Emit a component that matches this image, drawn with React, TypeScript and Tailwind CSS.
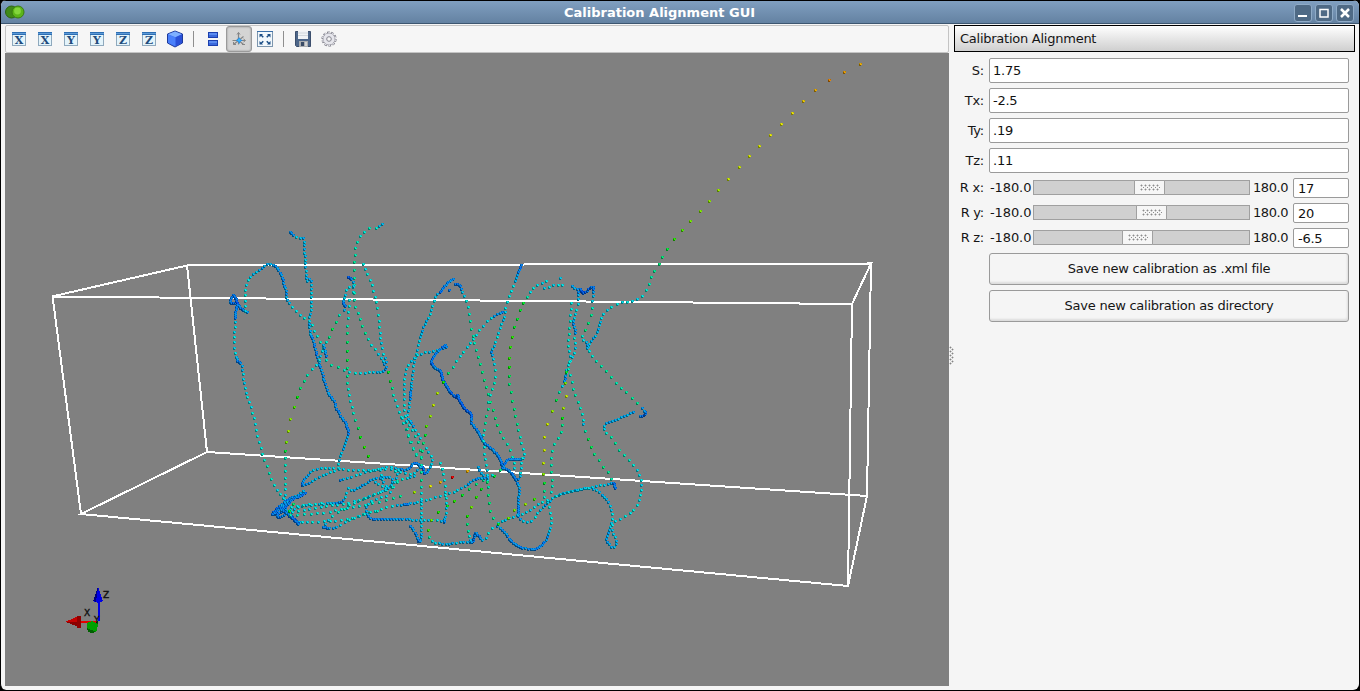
import { Fragment } from "react";
import type { ReactNode } from "react";

type Sample = [x: number, y: number, step: number];

/* Each track is "x,y,step"; step is the spacing between samples and drives the colour. */
const TRACKS: string[] = [
  "290,232,1 293,235,1.5 298,238,3 304,239,2 304,247,2.5 305,262,2.5 306,275,2.5 307,281,2 310,279,2 311,290,2.8 311,310,3 309,320,2 310,333,2 312,338,1.3 317,357,1.3 321,370,1.5 328,393,1.5 333,400,1.3 338,412,1.3 345,423,1.3 348,432,1.2 347,438,2 343,448,2 339,460,3 338,467,4",
  "233,295,1 230,302,1 237,303,.8 240,308,1.2 247,312,1.2",
  "234,296,1 237,303,.7 236,307,1.2 235,318,1.2 235,327,4.2 234,338,4.2 235,353,4 237,360,1 240,363,1 242,368,2.4 243,377,3.5 245,387,3.5 248,400,4 252,412,4.5 255,425,5 259,442,5 263,456,5.5 267,467,6 270,477,6 275,487,5 280,495,4.5 285,500,4",
  "245,311,4 245,293,4.5 247,282,4 252,275,3 260,270,2 268,264,2 275,266,1.5 280,273,1.5 283,282,1.5 286,292,1.5 287,300,2 295,310,4.5 302,317,5 310,322,4 315,332,5 321,344,6 325,353,5 328,363,6 337,366,7 348,372,5 360,373,4 373,372,3 383,371,2 386,367,1.5 383,362,2 377,352,4 370,343,5 365,333,7 362,327,7 358,313,6 355,307,6 354,290,6 354,265,7 355,252,6 357,242,6 362,234,5 368,228,6 375,228,6 380,225,2 382,224,2",
  "386,362,2 383,352,4 380,338,4 379,325,5 377,307,5.5 375,297,5 371,283,5 367,275,5 362,263,4",
  "388,372,9 390,381,9 392,390,7 394,398,5 398,410,5 402,420,5 406,430,6 410,440,6 414,450,6 419,458,6",
  "348,277,.7 352,280,1 353,286,4 353,295,5",
  "353,286,3 349,287,3 346,290,4 344,297,3 343,303,1.2 345,307,1 342,312,4 338,317,7 334,325,8 330,333,9 327,341,6 323,347,4 320,357,3.5 317,363,4 308,374,6 305,380,7 300,387,8 295,403,10 289,423,12 287,437,12 285,448,10 285,458,6 285,477,5.5 285,493,4 285,503,4",
  "323,345,2 325,352,1.5 327,358,1.5",
  "349,300,5 348,317,5 347,337,8 347,357,9 347,376,7 348,392,5 351,403,5 354,417,6 357,425,8 359,434,9 363,444,10 367,453,10 371,463,9",
  "453,279,1.2 447,283,1.3 440,292,1 435,297,3 432,307,3.4 428,318,3 423,328,2 418,345,3 414,362,3 412,378,3 410,395,1 409,405,3 407,417,3 412,424,1.3 417,433,4 422,442,4.5 427,450,4 432,457,4 431,463,3 428,470,1.5 424,473,1 422,467,1 415,463,1 407,469,1.5 400,469,1.7 390,467,3 373,470,3.5 353,470,4 335,468,3.5 320,468,3 312,471,2.5 305,478,1.7 302,485,.8 306,484,1.5 317,478,2.8 330,472,3 340,469,4",
  "449,290,.8",
  "455,284,1 460,286,1 463,295,3 467,305,5 471,327,7 474,342,6 478,357,7 483,377,8 487,392,7 492,408,8 497,425,8 500,432,7 506,443,6 512,455,6 515,472,4",
  "446,347,1 440,349,2 432,351,3 423,353,3 415,357,3 407,367,3.5 404,383,4 404,403,4 405,417,5 407,430,6 413,450,6 420,460,6",
  "402,418,4 408,424,4 416,438,6 420,448,7 421,460,6",
  "445,345,1 437,352,1.2 431,362,.9 435,368,1.3 440,371,.9 443,380,.9 450,392,.9 457,397,.8 457,395,.8 463,407,.8 471,414,.7 471,422,1.3 477,430,1.3 483,442,1.2 493,450,1.3 499,458,1.2 503,467,1 510,472,1.2 516,480,1.2 519,488,1.7 518,500,1.7 518,515,1 522,520,2.5 528,522,3 533,519,4 538,512,4 545,505,1.6 553,498,2.5 563,493,3 577,490,2.5 590,488,2.5 598,492,2.2 607,500,2.2 611,510,3 612,520,4 610,528,2.2 607,535,1.8 607,541,2 612,547,2 616,545,2 615,538,2.5 612,532,3 613,522,4 622,518,5 630,513,4.5 638,503,4.5 641,488,4 640,477,4 635,467,5 627,458,6 618,448,6.5 613,439,7 605,432,5 604,425,2 610,422,2 622,417,2 633,412,2",
  "640,416,1 645,414,.8 642,408,1.5 637,403,7 628,394,7 618,385,6 607,373,7 596,361,6 590,353,5 588,347,3 592,340,2 598,330,2.5 601,318,3 607,310,4 620,303,5 633,301,4 642,296,5 648,286,6 653,273,7 658,265,8 662,257,8 668,248,9",
  "521,265,.9 517,275,1.4 513,287,4 510,293,5 506,305,5 504,317,3 502,322,2.5 498,332,4 495,343,4 491,352,1.4 493,358,3 495,372,5 493,387,6 489,398,5 488,407,7 486,417,7 484,430,6 483,433,5 484,450,5 486,465,5 487,477,3 488,492,8 490,510,8 493,518,7",
  "502,312,1.2 495,315,1.7 488,320,4 480,329,5 470,343,4 460,356,4.5 453,366,6 449,372,8 444,380,9 439,389,12 434,401,13 431,413,12 427,424,11 425,435,9 422,452,7 421,465,6 421,480,7 421,500,4 421,517,3.4 421,533,2.5 419,542,.9 415,533,1.5 409,524,1.7",
  "444,522,1 437,520,3 420,520,3 400,519,1.5 373,519,1.3 367,513,1.5 367,505,2.5 373,500,4 387,495,4 393,488,5 398,478,7",
  "523,303,9 529,293,5 535,286,4 544,282,4 550,281,4",
  "560,278,3 563,279,4",
  "544,288,4 555,285,3.5 565,285,4",
  "572,286,2 577,290,1.4 578,297,2 578,305,5 575,313,4 573,322,1.5 575,332,1.7 574,338,5 575,350,3.5 570,360,3.5 567,367,4 565,377,1.5 563,383,1.5 561,388,5 557,398,8 553,408,11 549,419,13 545,432,13 544,446,13 543,459,13 543,472,12 544,483,9 544,495,6 547,503,4 550,512,5 551,523,4 548,535,1.8 543,543,1.3 537,548,1 528,549,1.5 518,546,1.3 510,540,1.2 505,533,1.6 497,525,1.7 500,522,3 513,517,3 527,512,3.5 533,508,4 542,502,4 552,498,4 563,493,3 580,489,3 597,486,3 607,484,3 613,483,1 615,489,1",
  "520,310,9 517,318,9 514,327,9 512,336,10 510,346,10 509,364,10 509,380,8 511,395,8 514,411,8 517,425,7 519,433,6 523,450,5 524,457,4 520,459,1.2 510,459,1.2 505,462,1.2 502,468,1.2",
  "522,458,4 521,466,4.5 520,475,3 518,480,1",
  "580,289,.8 583,293,.7 592,287,.8 593,293,1.5 592,303,5 591,313,7 588,323,8 584,332,8 582,338,4 587,343,2 587,350,2",
  "571,303,5 570,317,5 569,330,6 568,345,5 570,355,4 568,367,6 571,378,5.5 574,392,6.5 579,405,6 583,420,5 583,425,3 586,434,8 589,443,9 593,452,8 598,459,7 603,466,8 608,473,7 612,482,6",
  "566,372,9 565,383,11 566,395,13 563,409,12 562,421,8 562,428,7 558,438,6 553,448,6 551,462,6 551,475,7 552,485,6 550,497,5",
  "500,470,8 493,477,9 488,481,8 482,487,9 476,497,10 471,506,11 467,515,10 467,523,8 468,533,6 472,542,.8 475,533,1.1 480,538,1.3 484,540,3 488,533,5 495,525,4",
  "483,480,7 473,486,8 463,494,9 454,501,10 445,507,9 437,513,10 432,519,11 428,528,11 428,535,8 433,542,3 447,544,1.8 460,542,3 472,542,1",
  "487,478,2 475,479,1.5 463,487,2.5 450,493,3.5 433,498,4 417,502,3 405,504,.8 400,505,2 387,507,5 367,513,5 347,519,5 330,521,4.5 313,522,5 300,522,3 298,523,.8 292,517,.8 285,512,1",
  "440,463,5 443,473,5 445,487,5 446,507,4 444,522,1",
  "305,493,1 293,497,.9 283,503,1 273,513,.8 282,512,1 283,507,1 277,511,1 278,517,1 287,512,1.5 281,506,2 285,501,2",
  "303,491,2 290,500,2 279,509,1 272,514,1",
  "302,495,1 291,500,1 287,505,1 281,510,1 285,512,1 298,524,.9",
  "290,510,3 303,506,3 320,504,3 340,502,1.1 345,497,3 348,488,4 353,490,2 363,485,1.8 373,479,2 387,477,2 392,480,2 388,488,3 377,493,4 360,500,4 347,506,5",
  "340,480,1.4 353,476,3.4 370,471,4 387,469,4 400,472,4 412,474,4 420,467,2",
  "291,507,5 310,504,5 325,503,5",
  "292,512,4.5 320,507,4.5 347,503,4.5 370,496,4 390,488,6 400,480,6 409,477,3 415,476,2",
  "290,515,6 320,513,5 353,507,5 387,500,6 407,493,8",
  "323,527,.8 332,528,1.7 343,523,4 353,518,4 367,513,5 380,510,6",
  "323,527,1 330,517,5 342,510,6 353,503,5 365,498,5",
  "380,470,4 382,480,3 387,488,3 378,484,3 372,479,3",
  "398,470,3 395,480,3 390,486,3 384,491,3",
  "498,524,9 508,518,11 515,509,11 523,505,12 531,500,11 540,498,8",
  "478,467,2 482,474,2 489,477,3 494,473,7",
  "289,511,9 292,505,8 296,500,9",
];

const FAR_DOTS: Sample[] = [
  [674, 239, 10], [681.7, 230.3, 10.5], [690, 221.3, 11], [699.7, 211.3, 11.3], [708.7, 201, 11.6],
  [718.3, 189.7, 12], [728, 178.7, 13], [738.7, 167.3, 13], [748.7, 156, 13.4], [759.3, 145.7, 13.6],
  [770, 135.3, 14], [781, 124.3, 14], [791.7, 113.3, 14.5], [803, 101.3, 15.3], [814.7, 89.7, 16],
  [828.7, 80.3, 17], [844.3, 72, 16.4], [859.7, 64.3, 16],
  [451.7, 476.5, 20], [467, 471, 16], [439.5, 481.5, 16], [430, 485.5, 14], [414, 492, 12],
];

const HUES: [number, number][] = [
  [0.7, 216], [1, 209], [1.5, 203], [2.2, 194], [3.5, 185], [5, 178], [6.5, 163], [8, 152],
  [9.5, 120], [11, 90], [13, 68], [15, 54], [16, 44], [17, 34], [20, 0],
];

function hueFor(step: number): number {
  for (let i = 1; i < HUES.length; i++) {
    const [s1, h1] = HUES[i];
    const [s0, h0] = HUES[i - 1];
    if (step <= s1) return h0 + ((h1 - h0) * Math.max(0, step - s0)) / (s1 - s0);
  }
  return 0;
}

function spline(a: number, b: number, c: number, d: number, t: number): number {
  return 0.5 * (2 * b + (c - a) * t + (2 * a - 5 * b + 4 * c - d) * t * t + (3 * b - a - 3 * c + d) * t * t * t);
}

function sampleTrack(source: string): Sample[] {
  const pts = source.split(" ").map((p) => p.split(",").map(Number) as Sample);
  const out: Sample[] = [pts[0]];
  let travelled = 0;
  let [px, py] = pts[0];
  for (let i = 0; i < pts.length - 1; i++) {
    const p0 = pts[Math.max(0, i - 1)];
    const p1 = pts[i];
    const p2 = pts[i + 1];
    const p3 = pts[Math.min(pts.length - 1, i + 2)];
    for (let k = 1; k <= 40; k++) {
      const t = k / 40;
      const x = spline(p0[0], p1[0], p2[0], p3[0], t);
      const y = spline(p0[1], p1[1], p2[1], p3[1], t);
      const step = p1[2] + (p2[2] - p1[2]) * t;
      travelled += Math.hypot(x - px, y - py);
      px = x;
      py = y;
      const gap = step < 1.3 ? 1.8 : step < 7 ? step * 0.9 + 1.3 : step;
      if (travelled >= gap) {
        out.push([x, y, step]);
        travelled = 0;
      }
    }
  }
  return out;
}

const DOTS: Sample[] = [...TRACKS.flatMap(sampleTrack), ...FAR_DOTS];

function Dot({ dot, index }: { dot: Sample; index: number }) {
  const [rx, ry, step] = dot;
  const x = Math.round(rx) - 1;
  const y = Math.round(ry) - 1;
  const jitter = step < 5 ? ((index * 37) % 11) - 5 : 0;
  const h = Math.round(hueFor(step) + jitter);
  const light = h > 195 ? 42 : 41;
  return (
    <Fragment>
      <path d={`M${x} ${y}h3v2h-1v1h-2z`} fill={`hsl(${h} 100% ${light - 4}%)`} />
      <path d={`M${x + 1} ${y}h1v1h1v1h-2z`} fill={`hsl(${h} 92% ${light + 6}%)`} />
      <path d={`M${x} ${y + 1}h1v1h1v1h-2z`} fill={`hsl(${h} 100% ${light - 16}%)`} />
    </Fragment>
  );
}

function Scene() {
  return (
    <svg className="block h-[633px] w-[944px]" viewBox="5 53 944 633" shapeRendering="crispEdges">
      <rect x="5" y="53" width="944" height="633" fill="#808080" />
      <g fill="none" stroke="#fff" strokeWidth="2">
        <path d="M52 296.500L852 304L871 263.500L187 265.500Z" />
        <path d="M81 514L848 586L867 496L207 452Z" />
        <path d="M52.500 296L81 514M187 265L207 452M871 263L867 496M852 304L848 586" />
      </g>
      {DOTS.map((d, i) => (
        <Dot key={i} dot={d} index={i} />
      ))}
      <g>
        <path d="M99 621V599" stroke="#0000e6" strokeWidth="2" />
        <path d="M98 587L103 601L98 603L93 601Z" fill="#0000e6" />
        <path d="M98 587L93 601L96 602Z" fill="#000080" />
        <path d="M98 622H80" stroke="#e60000" strokeWidth="2" />
        <path d="M66 621.500L79 616L81 621L79 627Z" fill="#c40000" />
        <path d="M66 622L79 622V627Z" fill="#8a0000" />
        <path d="M77 616h4v12h-4z" fill="#900000" />
        <path d="M98 622L94 625" stroke="#005a00" strokeWidth="2" />
        <path d="M87 623L92 621L98 624L97 631L92 633L87 630Z" fill="#00a000" />
        <path d="M87 628L96 632L92 633L88 632Z" fill="#006000" />
      </g>
      <g className="font-['DejaVu_Sans'] text-[9px]" fill="#111" stroke="#111" strokeWidth=".4">
        <text x="84" y="616">X</text>
        <text x="103" y="598">Z</text>
        <text x="94" y="623">Y</text>
      </g>
    </svg>
  );
}

function AxisIcon({ axis }: { axis: string }) {
  return (
    <svg width="14" height="14" viewBox="0 0 14 14" shapeRendering="crispEdges">
      <rect width="14" height="14" fill="#8fa9bd" />
      <rect x="1" y="3" width="12" height="10" fill="#e4f4fb" />
      <rect width="14" height="3" fill="#2d6fb4" />
      <rect y="1" width="14" height="1" fill="#5e9ad6" />
      <text x="7" y="12" textAnchor="middle" className="font-['DejaVu_Serif'] text-[11px] font-bold" fill="#1f4c7c">
        {axis}
      </text>
    </svg>
  );
}

function CubeIcon() {
  return (
    <svg width="18" height="18" viewBox="0 0 18 18">
      <path d="M9 1L16.500 4V13L9 17L1.500 13V4Z" fill="#3f6ff0" stroke="#1e3a9a" />
      <path d="M9 1.500L16 4.300L9.500 7.300L2 4.300Z" fill="#7fb0ff" />
      <path d="M9.500 7.300L16 4.300V12.700L9.500 16.400Z" fill="#2a50d8" />
      <path d="M2 4.500L9.300 7.500V16L2 12.700Z" fill="#4a80fb" />
    </svg>
  );
}

function StackIcon() {
  return (
    <svg width="12" height="16" viewBox="0 0 12 16" shapeRendering="crispEdges">
      <path d="M1 1h10v6H1zM1 9h10v6H1z" fill="#1c3fae" />
      <path d="M2 2h8v4H2zM2 10h8v4H2z" fill="#3a69dc" />
      <path d="M2 2h8v2H2zM2 10h8v2H2z" fill="#5a8bf0" />
    </svg>
  );
}

function CenterAxesIcon() {
  return (
    <svg width="16" height="16" viewBox="0 0 16 16">
      <path d="M7.500 1.500V13.500M1.500 9.500H14M2.500 13.500L12.500 5.500M6 8L12.500 13.500" stroke="#858585" strokeWidth="1.200" />
      <path d="M6 3.500L7.500 1.500L9 3.500M3 13.500h2M12.500 8l2 1.500L12.500 11M2.500 11v2.500h2.500M11 13.500h3" fill="none" stroke="#858585" />
      <path d="M8 6L9.300 8.200L11.500 9.300L9.500 10.500L8.300 13L7 10.500L4.700 9.300L7 8.200Z" fill="#1e8ff0" />
      <circle cx="8.200" cy="9.300" r="1.400" fill="#35b8ff" />
    </svg>
  );
}

function FitIcon() {
  return (
    <svg width="16" height="16" viewBox="0 0 16 16">
      <rect x=".5" y=".5" width="15" height="15" fill="#f2f8fc" stroke="#7d96ae" />
      <path d="M0 .5H16" stroke="#3b6fa8" />
      <path d="M2.500 3H6L5 4L6.800 5.800L5.700 6.800L4 5L2.500 6.500Z M13.500 3H10L11 4L9.200 5.800L10.300 6.800L12 5L13.500 6.500Z M2.500 13.500H6L5 12.500L6.800 10.700L5.700 9.700L4 11.500L2.500 10Z M13.500 13.500H10L11 12.500L9.200 10.700L10.300 9.700L12 11.500L13.500 10Z" fill="#1c4e86" />
    </svg>
  );
}

function FloppyIcon() {
  return (
    <svg width="16" height="16" viewBox="0 0 16 16">
      <path d="M.5 .5H15.500V15.500H1.500L.5 14.500Z" fill="#4d6689" stroke="#3c4f6d" />
      <path d="M3 0h10v8H3z" fill="#f1f3f5" />
      <path d="M3 2h10M3 4.500h10" stroke="#d2d7dc" />
      <path d="M4 10h9v6H4z" fill="#aaadb0" />
      <path d="M6 11h3v4H6z" fill="#394b66" />
      <path d="M10 11h2v4h-2z" fill="#d2d3d4" />
    </svg>
  );
}

function GearIcon() {
  return (
    <svg width="16" height="16" viewBox="0 0 16 16">
      <circle cx="8" cy="8" r="6.600" fill="none" stroke="#7b7b86" strokeWidth="2" strokeDasharray="2.600 1.547" />
      <circle cx="8" cy="8" r="6" fill="#e6e6ec" stroke="#85858f" strokeWidth=".7" />
      <circle cx="8" cy="8" r="6.400" fill="none" stroke="#e0e0e6" strokeWidth="1.400" strokeDasharray="1.600 2.421" strokeDashoffset="-.5" />
      <circle cx="8" cy="8" r="2.300" fill="#f6f6f6" stroke="#85858f" />
    </svg>
  );
}

function Tool({ children, pressed = false }: { children: ReactNode; pressed?: boolean }) {
  const frame = pressed ? "border border-[#9a9a9a] bg-[#d4d4d4] rounded-[3px] shadow-[inset_0_0_2px_#888]" : "";
  return <button className={`flex h-[26px] w-[26px] shrink-0 items-center justify-center ${frame}`}>{children}</button>;
}

function Separator() {
  return (
    <div className="flex w-3 shrink-0 pl-[5px]">
      <div className="h-4 w-px bg-[#8e8e8e]" />
    </div>
  );
}

function Toolbar() {
  return (
    <div className="flex h-7 items-center rounded-[2px] border border-[#c4c4c4] bg-[#f6f6f6]">
      {["X", "X", "Y", "Y", "Z", "Z"].map((axis, i) => (
        <Tool key={i}>
          <AxisIcon axis={axis} />
        </Tool>
      ))}
      <Tool><CubeIcon /></Tool>
      <Separator />
      <Tool><StackIcon /></Tool>
      <Tool pressed><CenterAxesIcon /></Tool>
      <Tool><FitIcon /></Tool>
      <Separator />
      <Tool><FloppyIcon /></Tool>
      <Tool><GearIcon /></Tool>
    </div>
  );
}

function WindowButton({ children }: { children: ReactNode }) {
  return (
    <button className="flex h-[18px] w-[18px] items-center justify-center rounded-[3px] border border-[#8fabc7] bg-[#4f6a85]">
      <svg width="10" height="10" viewBox="0 0 10 10" fill="none" stroke="#fff" strokeWidth="2">
        {children}
      </svg>
    </button>
  );
}

function TitleBar() {
  return (
    <div className="flex h-6 shrink-0 items-center border-t border-b border-t-black border-b-[#3d5670] bg-linear-to-b from-[#809fc0] to-[#6482a2] px-1">
      <svg width="20" height="14" viewBox="0 0 20 14">
        <circle cx="6.500" cy="7" r="6" fill="#3f8a18" stroke="#2c6410" />
        <circle cx="13" cy="7" r="6" fill="#5cb51a" stroke="#3a7d10" />
        <circle cx="12.500" cy="6" r="3.400" fill="#83d63c" />
      </svg>
      <div className="flex-1 pt-0.5 text-center text-[13px] leading-4 font-bold tracking-normal text-white">Calibration Alignment GUI</div>
      <div className="flex gap-[3px] pt-0.5 pr-px">
        <WindowButton><path d="M0 8H9" /></WindowButton>
        <WindowButton><path d="M1 1.500H9V9H1Z" strokeWidth="1.500" /></WindowButton>
        <WindowButton><path d="M1 1L9 9M9 1L1 9" strokeWidth="2.500" /></WindowButton>
      </div>
    </div>
  );
}

function TextField({ label, value }: { label: string; value: string }) {
  return (
    <div className="flex h-[26px] items-center">
      <div className="w-[30px] shrink-0 pt-px text-right">{label}</div>
      <input
        className="ml-[5px] h-[25px] w-[360px] rounded-[2px] border border-[#9a9a9a] bg-white px-[3px] text-[#111] outline-none"
        defaultValue={value}
      />
    </div>
  );
}

function Grip() {
  return (
    <svg width="20" height="7" viewBox="0 0 20 7" shapeRendering="crispEdges">
      {[0, 4, 8, 12, 16].map((x) => (
        <Fragment key={x}>
          <path d={`M${x} 1h3v1h-3zM${x + 1} 0h1v3h-1zM${x} 5h3v1h-3zM${x + 1} 4h1v3h-1z`} fill="#c8c8c8" />
          <path d={`M${x + 1} 1h1v1h-1zM${x + 1} 5h1v1h-1zM${x + 3} 3h1v1h-1z`} fill="#8c8c8c" />
        </Fragment>
      ))}
    </svg>
  );
}

function SliderField({ label, value, offset }: { label: string; value: string; offset: number }) {
  return (
    <div className="flex h-[25px] items-start">
      <div className="w-[30px] shrink-0 pt-[2px] text-right leading-4 whitespace-nowrap">{label}</div>
      <div className="ml-[6px] w-[43px] pt-[2px] leading-4 tracking-[-0.1px] whitespace-nowrap">-180.0</div>
      <div className="mt-[2px] h-[15px] w-[217px] shrink-0 border border-[#a0a0a0] bg-[#d0d0d0]">
        <div
          className="-mt-px flex h-[15px] w-[31px] items-center justify-center rounded-[1px] border border-[#a0a0a0] bg-[#f6f6f6]"
          style={{ marginLeft: offset }}
        >
          <Grip />
        </div>
      </div>
      <div className="ml-[3px] w-10 pt-[2px] leading-4 tracking-[-0.4px]">180.0</div>
      <input
        className="h-5 w-14 rounded-[2px] border border-[#9a9a9a] bg-white px-1 text-[#111] outline-none"
        defaultValue={value}
      />
    </div>
  );
}

function ActionButton({ children }: { children: ReactNode }) {
  return (
    <button className="ml-[35px] flex h-8 w-[360px] items-center justify-center rounded-[3px] border border-[#9a9a9a] bg-[#f5f5f5] shadow-[inset_-1px_-2px_2px_#dcdcdc]">
      {children}
    </button>
  );
}

function SidePanel() {
  return (
    <div className="flex w-[401px] flex-col tracking-[-0.25px]">
      <div className="flex h-[27px] items-center border border-black bg-linear-to-b from-white to-[#cfcfcf] px-[5px]">
        Calibration Alignment
      </div>
      <div className="mt-[5px] flex flex-col gap-1">
        <TextField label="S:" value="1.75" />
        <TextField label="Tx:" value="-2.5" />
        <TextField label="Ty:" value=".19" />
        <TextField label="Tz:" value=".11" />
      </div>
      <div className="mt-[5px] flex flex-col">
        <SliderField label="R x:" value="17" offset={100} />
        <SliderField label="R y:" value="20" offset={102} />
        <SliderField label="R z:" value="-6.5" offset={88} />
      </div>
      <div className="flex flex-col gap-[5px]">
        <ActionButton>Save new calibration as .xml file</ActionButton>
        <ActionButton>Save new calibration as directory</ActionButton>
      </div>
    </div>
  );
}

function SplitterGrip() {
  return (
    <div className="flex w-[5px] items-center pb-1">
      <svg width="5" height="19" viewBox="0 0 5 19" shapeRendering="crispEdges">
        {[0, 4, 8, 12, 16].map((y) => (
          <Fragment key={y}>
            <path d={`M1 ${y}h1v3h-1zM0 ${y + 1}h3v1h-3z`} fill="#c8c8c8" />
            <path d={`M1 ${y + 1}h1v1h-1z`} fill="#848484" />
          </Fragment>
        ))}
        {[2, 6, 10, 14].map((y) => (
          <Fragment key={y}>
            <path d={`M3 ${y}h1v3h-1zM2 ${y + 1}h3v1h-3z`} fill="#c8c8c8" />
            <path d={`M3 ${y + 1}h1v1h-1z`} fill="#848484" />
          </Fragment>
        ))}
      </svg>
    </div>
  );
}

export default function App() {
  return (
    <div className="h-[691px] w-[1360px] overflow-hidden bg-black font-['DejaVu_Sans',sans-serif] text-[13px] text-[#151515]">
      <div className="flex h-[690px] w-[1359px] flex-col overflow-hidden rounded-[6px] border-l border-black bg-[#f5f5f5]">
        <TitleBar />
        <div className="flex flex-1 pt-px pl-1">
          <div className="flex w-[944px] flex-col">
            <Toolbar />
            <Scene />
          </div>
          <SplitterGrip />
          <SidePanel />
        </div>
      </div>
    </div>
  );
}
